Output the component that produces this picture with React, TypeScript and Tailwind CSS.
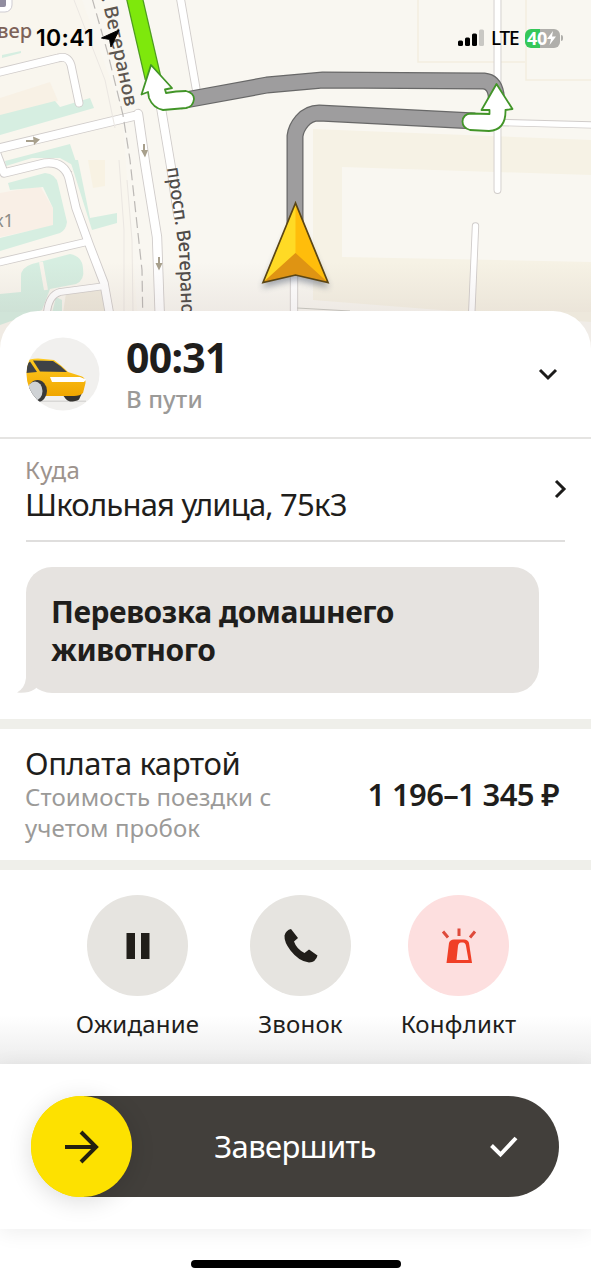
import * as React from "react";

const ROADS = [
  { d: "M-4 73 L58 58 Q68 55 71 65 L79 103", w: 7 },
  { d: "M-4 149 L134 116", w: 8 },
  { d: "M138 114 L145 163 L157 237 L161 350", w: 8.5 },
  { d: "M158 90 L171 167 L178 215", w: 8 },
  { d: "M180 -4 L196 88", w: 7 },
  { d: "M-4 152 L4 173 L45 163 Q64 161 69 178 L76 208 L89 244 L104 283 L116 350", w: 7.5 },
  { d: "M-4 263 L86 242", w: 6.5 },
  { d: "M105 286 L60 292 Q49 295 47 312", w: 6 },
  { d: "M497.500 -4 V190", w: 6 },
  { d: "M500 122.500 L595 125", w: 5.5 },
  { d: "M475.500 226 L471 330", w: 5.5 },
  { d: "M294 270 V320", w: 6.5 },
];

const ROUTE = [
  "M180 101 L267 85 L323 80 L484 81 Q494 82 496 94 L497 106",
  "M295 250 V136 Q296 128 302 121 Q309 113 319 113 L475 121",
];

const font = "font-['Noto_Sans',sans-serif]";

function MapView() {
  return (
    <svg className="block h-[350px] w-full" viewBox="0 0 591 350">
      <defs>
        <linearGradient id="fade" x1="0" y1="0" x2="0" y2="1">
          <stop offset="0" stopColor="#8a6f70" stopOpacity="0" />
          <stop offset="1" stopColor="#8a6f70" stopOpacity="0.1" />
        </linearGradient>
        <filter id="soft" x="-30%" y="-30%" width="160%" height="160%">
          <feGaussianBlur stdDeviation="3" />
        </filter>
        <path id="street1" d="M99 -14 L112 45 L128 120" />
        <path id="street2" d="M167 168 L173 208 L179 250 L183 345" />
      </defs>
      <rect width="591" height="350" fill="#f9f7f1" />
      <path d="M0 0 H82 L122 112 L140 350 H0Z" fill="#f9f6ee" />

      {/* blocks */}
      <path d="M0 98 L50 82 L58 101 L0 116Z" fill="#f8f1e5" />
      <path d="M313 129 L591 140 V322 L313 300Z" fill="#f6f2e5" />
      <path d="M342 167 L591 175 V262 L342 257Z" fill="#f9f7f1" />
      <path d="M0 193 L40 186 L54 210 V226 L0 237Z" fill="#f9efe6" />
      <path d="M66 293 L106 290 L112 312 L62 320Z" fill="#efeadd" />
      <path d="M88 160 H105 V186 L93 188Z" fill="#f8f2e3" />
      <g fill="none" stroke="#f3eedf" strokeWidth="1.500">
        <path d="M418 0 V62 H525" />
        <path d="M526 0 V80 H591" />
      </g>

      {/* greenery */}
      <g fill="#d6eee1">
        <path d="M0 115 L55 101 L60 107 L90 98 L94 108 L0 135Z" />
        <path d="M5 161 L70 144 L78 168 L60 158 L32 158 L6 166Z" />
        <path d="M70 160 H78 L90 218 L117 213 V223 L92 230Z" />
        <path d="M8 183 L45 173 Q56 174 58 184 L67 222 Q66 230 60 233 L0 251 V238 L53 225 V208 L43 187 L10 190Z" />
        <path d="M21 277 Q20 268 32 264 L70 254 Q82 256 83 268 Q85 280 76 284 L50 289 L42 310 L0 325 V294 L21 292Z" />
        <path d="M2 55 L21 51 V53 L2 58Z" />
        <path d="M56 297 L62 300 V313 H52Z" />
      </g>
      <path d="M41 262 L46 290" stroke="#f9f4ec" strokeWidth="4" />
      <path d="M8 173 Q50 155 72 172" fill="none" stroke="#ccc6c2" strokeWidth="1" />
      <rect x="-10" y="-10" width="22" height="22" rx="7" fill="#fff" stroke="#cfccd2" />
      <rect x="-3" y="-6" width="9" height="13" rx="2" fill="#918da0" />

      {/* roads: casing first, then the surface */}
      <g fill="none" stroke="#d0ccca" strokeLinecap="round" strokeLinejoin="round">
        {ROADS.map((r) => (
          <path key={r.d} d={r.d} strokeWidth={r.w + 1.8} />
        ))}
      </g>
      <g fill="none" stroke="#fff" strokeLinecap="round" strokeLinejoin="round">
        {ROADS.map((r) => (
          <path key={r.d} d={r.d} strokeWidth={r.w} />
        ))}
      </g>
      <path d="M297 308 L350 311" stroke="#c9c9c2" />
      <g fill="none" stroke="#ebe7e2" strokeWidth="1">
        <path d="M74 0 L105 80 L115 128" />
        <path d="M119 160 L124 230 V312" />
        <path d="M127 180 L132 240 L133 312" />
      </g>
      <path d="M92 -2 L108 54 L123 115 L130 160 L142 270 L143 330" fill="none" stroke="#bcb9b6" strokeWidth="1.200" strokeDasharray="11 5" />
      <g stroke="#a8a08c" strokeWidth="2" fill="#a8a08c">
        <path d="M26 141 H34 M144 144 V151 M159 257 V264" />
        <path d="M33 136.500 L40 139.500 L34 145Z M141 150 H148 L145 157.500Z M155.500 263 H162.500 L159 270.500Z" strokeWidth="0" />
      </g>

      <g fill="#5d5650" className={font} fontSize="19" fontWeight="500">
        <text>
          <textPath href="#street1" textLength="124" lengthAdjust="spacingAndGlyphs">л. Ветеранов</textPath>
        </text>
        <text>
          <textPath href="#street2" textLength="158" lengthAdjust="spacingAndGlyphs" fill="#4f4b48">просп. Ветеранов</textPath>
        </text>
      </g>
      <text x="-3" y="38" fontSize="20" fontWeight="500" fill="#7d6258" className={font}>вер</text>
      <text x="-6" y="227" fontSize="18" fill="#8d8c86" className={font}>к1</text>

      <rect y="262" width="591" height="50" fill="url(#fade)" />
      <rect y="312" width="591" height="38" fill="#8a6f70" fillOpacity="0.080" />

      {/* route */}
      <g fill="none" stroke="#686868" strokeWidth="17" strokeLinejoin="round">
        {ROUTE.map((d) => <path key={d} d={d} />)}
      </g>
      <g fill="none" stroke="#9e9d9e" strokeWidth="14.500" strokeLinejoin="round">
        {ROUTE.map((d) => <path key={d} d={d} />)}
      </g>
      <path d="M134 -4 L153 78" stroke="#4d9c20" strokeWidth="17" />
      <path d="M134 -4 L153 78" stroke="#7ee80c" strokeWidth="14.500" />
      <g fill="#fff" stroke="#429528" strokeWidth="1.800" strokeLinejoin="round">
        <path d="M151 65 L172 88 L165 89.500 L166 93 Q176 91 186 91 Q194 93 194 99 Q193 107 186 108 L163 110 Q153 108 149 98 L148 92 L141.500 94.500Z" />
        <path d="M496.500 84 L512.500 109 L505.500 110 Q506 130 489 131 L470 130 Q462.500 128 462.500 121.500 Q463 114 471 113.500 L489.500 114 V110 H481.500Z" />
      </g>

      {/* own position */}
      <path d="M295.500 214 L262 288 L295.500 280 L329 288Z" fill="#3e4a60" opacity="0.450" filter="url(#soft)" />
      <path d="M295.500 203 L263 282.500 L295.500 275 L328 282.500Z" fill="#ffbd0b" />
      <path d="M295.500 203 L263 282.500 L295.500 253Z" fill="#ffda25" />
      <path d="M295.500 253 L263 282.500 L295.500 275 L328 282.500Z" fill="#df9413" />
      <path d="M295.500 203 L263 282.500 L295.500 275 L328 282.500Z" fill="none" stroke="#5b4615" strokeWidth="1.700" />
    </svg>
  );
}

function StatusBar() {
  return (
    <div className="absolute inset-x-0 top-0 flex h-[76px] items-center pr-[28px] pl-[36px] text-black">
      <span className="w-[60px] font-['Inter',sans-serif] text-[23px] font-semibold tracking-[0.3px] whitespace-nowrap">10:41</span>
      <svg className="ml-[5px] h-[19px] w-[19px]" viewBox="0 0 20 20">
        <path d="M19 1 L0.500 9.500 L9 11 L10.500 19Z" stroke="#000" strokeLinejoin="round" />
      </svg>
      <svg className="ml-auto h-[18px] w-[27px]" viewBox="0 0 27 18">
        <rect x="0" y="11.500" width="5" height="5.500" rx="1.500" />
        <rect x="7" y="8.500" width="5" height="8.500" rx="1.500" />
        <rect x="14" y="4.500" width="5" height="12.500" rx="1.500" />
        <rect x="21" y="0.500" width="5" height="16.500" rx="1.500" fill="#c9c8c4" />
      </svg>
      <span className="ml-[6px] w-[34px] text-[19px] font-medium tracking-[-1.2px]">LTE</span>
      <span className="flex h-[19px] w-[35px] items-center rounded-[6px] bg-linear-to-r from-[#35c759] from-42% to-[#b0afab] to-42% pl-[2px] text-[18px] leading-[19px] font-bold tracking-[-0.3px] text-white">
        40
        <svg className="h-[14px] w-[9px]" viewBox="0 0 9 14">
          <path d="M6 0 L0 8 H4 L2.500 14 L9 5.500 H5Z" fill="#fff" />
        </svg>
      </span>
      <span className="ml-[1px] h-[6px] w-[2px] rounded-r bg-[#b0afab]" />
    </div>
  );
}

function CarAvatar() {
  return (
    <svg className="h-[74px] w-[74px]" viewBox="26 337 74 74">
      <defs>
        <clipPath id="avatar"><circle cx="63" cy="374" r="36.500" /></clipPath>
        <linearGradient id="paint" x1="0" y1="0" x2="0" y2="1">
          <stop offset="0" stopColor="#ffcb22" />
          <stop offset="1" stopColor="#f0a600" />
        </linearGradient>
      </defs>
      <circle cx="63" cy="374" r="36.500" fill="#f1f0ee" />
      <g clipPath="url(#avatar)">
        <path d="M26 400.500 H86 V402 H26Z" fill="#d9d8d6" />
        <path d="M62 393 H82 L79 399.500 Q76 401.500 70 401.500 Q65 400 62 393Z" fill="#35332f" />
        <path d="M26 361 Q30 358.500 38 358.500 L54 360 Q61 365 68 372 L82 376.500 Q86 379 85.500 383 L83 393 Q80 396 74 396 L46 396 L44 386 L26 386Z" fill="url(#paint)" />
        <path d="M33 360.500 L53 361 Q60 365 67 372 L40 371.500Z" fill="#3f4246" />
        <path d="M27 364 L30 361.500 L37 372 L26 373Z" fill="#3f4246" />
        <ellipse cx="37.500" cy="391" rx="9.500" ry="11" fill="#393939" />
        <ellipse cx="35" cy="391" rx="7.500" ry="9.500" fill="#cfd2d5" />
        <path d="M50 377 H80 L86 379.500 L84 382 H52Z" fill="#fff" />
      </g>
    </svg>
  );
}

function Chevron({ className, d }: { className: string; d: string }) {
  return (
    <svg className={className} viewBox="0 0 20 20" fill="none" stroke="#1c1b1a" strokeWidth="3">
      <path d={d} />
    </svg>
  );
}

type ActionProps = { label: string; danger?: boolean; className: string; children: React.ReactNode };

function Action({ label, danger, className, children }: ActionProps) {
  return (
    <button className={`flex flex-col items-center ${className}`}>
      <span className={`flex h-[101px] w-[101px] items-center justify-center rounded-full ${danger ? "bg-[#fddfdf]" : "bg-[#e6e4e0]"}`}>
        {children}
      </span>
      <span className="mt-[11px] text-[24px] leading-[34px] tracking-[0.2px] whitespace-nowrap">{label}</span>
    </button>
  );
}

export default function App() {
  return (
    <div className={`relative flex h-[1280px] w-[591px] flex-col overflow-hidden bg-white text-[#1f1e1c] ${font}`}>
      <MapView />
      <StatusBar />

      <main className="relative -mt-[39px] flex h-[753px] shrink-0 flex-col rounded-t-[38px] bg-white">
        <header className="flex h-[128px] items-center border-b-2 border-[#e5e4e2] pr-[33px] pl-[26px]">
          <CarAvatar />
          <div className="ml-[26px] pt-[2px]">
            <div className="text-[41px] leading-[46px] font-bold tracking-[-0.7px]">00:31</div>
            <div className="mt-[2px] text-[24px] leading-[34px] font-medium tracking-[0.1px] text-[#9b9a98]">В пути</div>
          </div>
          <Chevron className="ml-auto h-5 w-5" d="M2 6 L10 14 L18 6" />
        </header>

        <section className="mx-[26px] flex h-[103px] items-center justify-between border-b-2 border-[#dfdedd]">
          <div className="-mt-[3px] -ml-px">
            <div className="text-[24px] leading-[32px] tracking-[0.4px] text-[#9d938d]">Куда</div>
            <div className="text-[31px] leading-[36px] tracking-[-0.8px]">Школьная улица, 75к3</div>
          </div>
          <Chevron className="-mt-[2px] -mr-[5px] h-5 w-5" d="M6 2 L14 10 L6 18" />
        </section>

        <div className="relative mt-[25px] ml-[26px] flex h-[126px] w-[513px] items-center rounded-[26px] bg-[#e6e3e0] pl-[25px]">
          <svg className="absolute bottom-0 -left-[9px] h-[30px] w-[30px]" viewBox="0 0 30 30">
            <path d="M9 0 V15 Q8 25 0 29.500 Q10 31 18 26 L30 14Z" fill="#e6e3e0" />
          </svg>
          <p className="relative pt-[2px] text-[30px] leading-[38px] font-bold tracking-[-0.450px]">
            Перевозка домашнего<br />животного
          </p>
        </div>

        <div className="mt-[26px] h-[10px] bg-[#efefea]" />
        <section className="flex h-[131px] items-center justify-between pr-[32px] pl-[25px]">
          <div className="-mt-[2px]">
            <div className="text-[31px] leading-[38px] tracking-[-0.4px]">Оплата картой</div>
            <div className="text-[24px] leading-[30.500px] tracking-[0.1px] text-[#9b9a98]">
              Стоимость поездки с<br />учетом пробок
            </div>
          </div>
          <div className="text-[31px] font-semibold tracking-[-0.65px] whitespace-nowrap">1 196–1 345 ₽</div>
        </section>
        <div className="h-[10px] bg-[#efefea]" />

        <section className="flex flex-1 items-start bg-linear-to-b from-white from-75% to-[#ececec] pt-[25px] pl-[73px]">
          <Action label="Ожидание" className="w-[129px]">
            <svg className="h-[26px] w-[24px]" viewBox="0 0 24 26" fill="#211e1a">
              <rect x="0.500" width="8.500" height="26" />
              <rect x="15" width="8.500" height="26" />
            </svg>
          </Action>
          <Action label="Звонок" className="ml-[34px] w-[129px]">
            <svg className="h-[36px] w-[36px]" viewBox="0 0 36 36" fill="#211e1a">
              <path d="M8 1 L15 10 L11 13.500 Q13.500 21 21.500 25 L26 21.500 L34.500 27.500 Q33 34 26 34.500 Q16 33.500 7.500 22.500 Q1 14 1.500 7.500 Q3 2 8 1Z" />
            </svg>
          </Action>
          <Action label="Конфликт" danger className="ml-[29px] w-[129px]">
            <svg className="h-[36px] w-[36px]" viewBox="0 0 36 36">
              <path d="M2 3.500 L7 9.500 M18 0.500 V8 M34 3.500 L29 9.500" stroke="#de4a3b" strokeWidth="3" />
              <path d="M8 15 Q9 11.500 13 11.500 H23 Q27 11.500 28 15 L31 35 H5.500Z" fill="#f03f27" />
              <path d="M17 18 Q17.500 14.500 20 14.500 H22 Q24.500 14.500 25 18 L27.500 32 H15.500Z" fill="#fddfdf" />
            </svg>
          </Action>
        </section>
      </main>

      <footer className="relative h-[165px] shrink-0 bg-white px-[31px] pt-[32px] shadow-[0_3px_20px_rgba(0,0,0,0.07)]">
        <div className="flex h-[101px] w-[528px] items-center rounded-full bg-linear-to-r from-[#fde100] from-10% to-[#423f3b] to-10%">
          <span className="flex h-[101px] w-[101px] shrink-0 items-center justify-center rounded-full bg-[#fde100] shadow-[0_4px_24px_rgba(0,0,0,0.14)]">
            <svg className="h-[34px] w-[34px]" viewBox="0 0 34 34" fill="none" stroke="#24210f" strokeWidth="4">
              <path d="M0 17 H31 M16 2 L31 17 L16 32" />
            </svg>
          </span>
          <span className="flex-1 pr-[32px] text-center text-[31px] tracking-[-0.6px] text-white">Завершить</span>
          <svg className="mr-[41px] h-[22px] w-[28px]" viewBox="0 0 28 22" fill="none" stroke="#fff" strokeWidth="4">
            <path d="M1.500 9.500 L10.500 18.500 L26 2" />
          </svg>
        </div>
      </footer>

      <div className="flex flex-1 justify-center pt-[31px]">
        <div className="h-[8px] w-[210px] rounded-full bg-black" />
      </div>
    </div>
  );
}
